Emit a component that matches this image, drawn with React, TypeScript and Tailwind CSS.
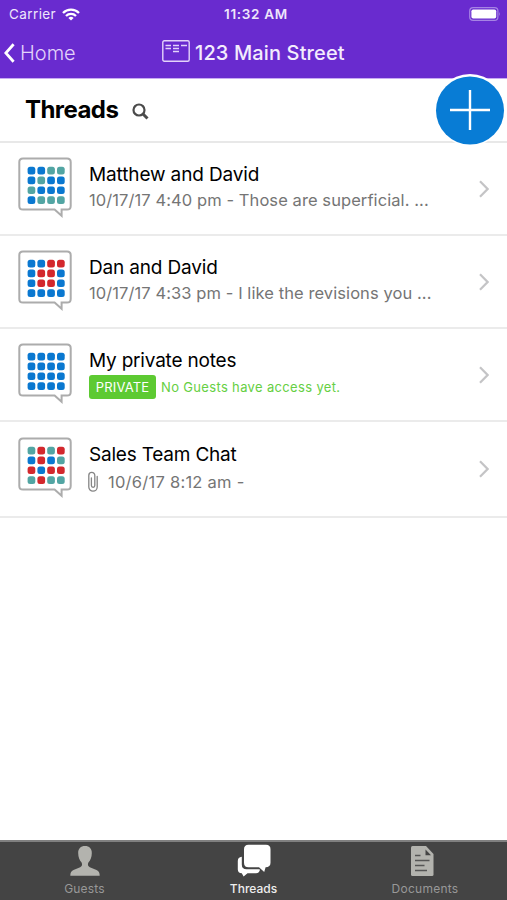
import React from "react";

type Thread = {
  title: string;
  titleClass: string;
  date: string;
  dateClass: string;
  cells: string;
  rowClass: string;
  isPrivate?: boolean;
  hasAttachment?: boolean;
};

const threads: Thread[] = [
  {
    title: "Matthew and David",
    titleClass: "tracking-[-0.13px]",
    date: "10/17/17 4:40 pm - Those are superficial. ...",
    dateClass: "tracking-[0.08px]",
    cells: "bbttbtbbtbbbbttt",
    rowClass: "h-[93px]",
  },
  {
    title: "Dan and David",
    titleClass: "tracking-[-0.17px]",
    date: "10/17/17 4:33 pm - I like the revisions you ...",
    dateClass: "tracking-[0.08px]",
    cells: "bbrrbrrbbrrbbbbb",
    rowClass: "h-[93px]",
  },
  {
    title: "My private notes",
    titleClass: "tracking-[-0.2px]",
    date: "",
    dateClass: "",
    cells: "bbbbbbbbbbbbbbbb",
    rowClass: "h-[93px]",
    isPrivate: true,
  },
  {
    title: "Sales Team Chat",
    titleClass: "tracking-[-0.2px]",
    date: "10/6/17 8:12 am -",
    dateClass: "tracking-[0.25px]",
    cells: "trtrbrbtrbrrtrtt",
    rowClass: "h-[96px] pt-px",
    hasAttachment: true,
  },
];

const cellColors: Record<string, string> = {
  b: "#0a78d0",
  t: "#52a5a3",
  r: "#d3282d",
};

const ThreadIcon = ({ cells }: { cells: string }) => (
  <svg width="54" height="62" viewBox="0 0 54 62" className="shrink-0">
    <path
      d="M5 1.4H49Q52.7 1.4 52.7 5V49Q52.7 52.6 49 52.6H43.6V58.8L36.6 52.6H5Q1.3 52.6 1.3 49V5Q1.3 1.4 5 1.4Z"
      fill="#fff"
      stroke="#acacac"
      strokeWidth="2"
    />
    {cells.split("").map((c, i) => (
      <rect
        key={i}
        x={9.6 + (i % 4) * 9.8}
        y={9.8 + Math.floor(i / 4) * 9.8}
        width="7.7"
        height="7.7"
        rx="2.5"
        fill={cellColors[c]}
      />
    ))}
  </svg>
);

const Paperclip = () => (
  <svg width="11" height="22" viewBox="0 0 11 22" fill="none" stroke="#858585" strokeWidth="1.3" strokeLinecap="round">
    <path d="M3.4 7V14.6A1.7 1.7 0 0 0 6.8 14.6V4.4A3 3 0 0 0 .8 4.4V16A4.2 4.2 0 0 0 9.2 16V5.5" />
  </svg>
);

const ThreadRow = ({ thread }: { thread: Thread }) => (
  <div className={`flex border-b-2 border-[#ebebeb] pl-[18px] pr-[18px] ${thread.rowClass}`}>
    <div className="pt-[14px]">
      <ThreadIcon cells={thread.cells} />
    </div>
    <div className="ml-[17px] grow pt-[19px] whitespace-nowrap">
      <div className={`text-[19px] leading-[26px] text-black ${thread.titleClass}`}>{thread.title}</div>
      {thread.isPrivate ? (
        <div className="mt-px flex h-6 items-center gap-[5px]">
          <span className="flex h-6 w-[67px] items-center justify-center rounded-[3px] bg-[#5dca32] pt-px text-[13px] tracking-[0.2px] text-white">
            PRIVATE
          </span>
          <span className="pt-px text-[13px] tracking-[0.34px] text-[#66cf43]">No Guests have access yet.</span>
        </div>
      ) : thread.hasAttachment ? (
        <div className="mt-px flex h-[26px] items-center text-[16.5px] text-[#757575]">
          <span className="-ml-px mr-[9px]">
            <Paperclip />
          </span>
          <span className={thread.dateClass}>{thread.date}</span>
        </div>
      ) : (
        <div className="text-[16.5px] leading-[24px] text-[#757575]">
          <span className={thread.dateClass}>{thread.date}</span>
        </div>
      )}
    </div>
    <svg width="10" height="18" viewBox="0 0 10 18" className="mt-[37px] shrink-0" fill="none" stroke="#c4c4c6" strokeWidth="2.2">
      <path d="M1 1.2L8.6 9L1 16.8" />
    </svg>
  </div>
);

const StatusBar = () => (
  <div className="flex h-7 items-center justify-between pl-[9px] pr-[6px] text-[13.5px] text-[#eee6fb]">
    <div className="flex w-[120px] items-center gap-[6px]">
      <span className="tracking-[0.4px]">Carrier</span>
      <svg width="18" height="13" viewBox="0 0 18 13" fill="none" stroke="#fff" strokeWidth="2.3">
        <path d="M1 5A11.2 11.2 0 0 1 17 5" />
        <path d="M4 8A7 7 0 0 1 14 8" />
        <path d="M9 12.6L6.4 10A3.7 3.7 0 0 1 11.6 10Z" fill="#fff" stroke="none" />
      </svg>
    </div>
    <span className="pl-[2px] font-semibold tracking-[0.7px]">11:32 AM</span>
    <div className="flex w-[120px] justify-end">
      <svg width="32" height="14" viewBox="0 0 32 14">
        <rect x="0.7" y="0.7" width="28.2" height="12.6" rx="3.4" fill="none" stroke="#a684e4" strokeWidth="1.2" />
        <rect x="2.4" y="2.4" width="24.8" height="9.2" rx="1.8" fill="#fff" />
        <path d="M30.2 4.8Q31.8 7 30.2 9.2Z" fill="#a684e4" />
      </svg>
    </div>
  </div>
);

const NavBar = () => (
  <div className="flex h-[50px] items-center text-[#f3ecfd]">
    <div className="flex w-[162px] items-center gap-[5px] pl-1">
      <svg width="11" height="20" viewBox="0 0 11 20" fill="none" stroke="#fff" strokeWidth="2.8">
        <path d="M9.6 1.2L1.8 10L9.6 18.8" />
      </svg>
      <span className="text-[20px] font-light text-[#e3d3fa]">Home</span>
    </div>
    <svg width="28" height="22" viewBox="0 0 28 22" fill="none" stroke="#e3d3fa" className="-mt-[4px]">
      <rect x="0.8" y="0.8" width="26.4" height="20.4" rx="1.5" strokeWidth="1.4" />
      <path d="M3.5 5.5H9M3.5 8.5H9M11 5.5H17M11 8.5H17M11 11.5H17M19 5.5H25" strokeWidth="1.3" />
    </svg>
    <span className="ml-[5px] text-[20px] font-medium tracking-[0.12px]">123 Main Street</span>
  </div>
);

const TabBar = () => (
  <div className="flex h-[60px] border-t-2 border-[#808080] bg-[#444] text-[12px] text-[#989898]">
    <div className="flex w-[169px] flex-col items-center">
      <svg width="30" height="31" viewBox="0 0 30 31" className="mt-[3px]" fill="#b3b3ae">
        <path d="M15 1C10.7 1 8 3.7 8.2 8.2C8.2 12.2 9.6 15.3 11.6 17.4C12.5 19.5 12.2 21 10.2 22.2L3.5 25C1 26.2 .3 27.7 .3 30.8H29.7C29.7 27.7 29 26.2 26.5 25L19.8 22.2C17.8 21 17.5 19.5 18.4 17.4C20.4 15.3 21.8 12.2 21.8 8.2C22 3.7 19.3 1 15 1Z" />
      </svg>
      <span className="mt-[5px] leading-4 tracking-[0.2px]">Guests</span>
    </div>
    <div className="flex w-[169px] flex-col items-center">
      <svg width="34" height="33" viewBox="0 0 34 33" className="mt-[2px]" fill="#fff">
        <path d="M4.8 12.7Q.8 13 .8 17V25.5Q.8 29 4.8 29.3L6.6 32.4L10.5 29.3H19Q22.5 29.3 23 25.6L21.5 25.2H9.5Q4.8 25.2 4.8 20.5Z" />
        <path d="M11.5 .8H29Q33.5 .8 33.5 5.3V18.8Q33.5 23.2 28.6 23.3L27.2 28L22 23.3H11.5Q7 23.3 7 18.8V5.3Q7 .8 11.5 .8Z" />
      </svg>
      <span className="mt-[4px] font-medium leading-4 text-[#eee]">Threads</span>
    </div>
    <div className="flex w-[169px] flex-col items-center">
      <svg width="23" height="30" viewBox="0 0 23 30" className="mt-[4px]">
        <path d="M1.5 0H15L22.5 8V28.5Q22.5 30 21 30H1.5Q0 30 0 28.5V1.5Q0 0 1.5 0Z" fill="#b3b3ae" />
        <path d="M14.5 3.5V9.2H20Z" fill="#444" />
        <path d="M4 9.5H9.5M4 14.5H18.5M4 19.5H13.5M4 24.5H16" stroke="#555" strokeWidth="1.7" />
      </svg>
      <span className="ml-[5px] mt-[5px] leading-4 tracking-[0.25px]">Documents</span>
    </div>
  </div>
);

const App: React.FC = (): React.JSX.Element => {
  return (
    <div className="relative flex h-[900px] w-[507px] flex-col bg-white font-[Inter,sans-serif]">
      <header className="h-[79px] shrink-0 border-b border-[#c8abf3] bg-[#692bcf]">
        <StatusBar />
        <NavBar />
      </header>
      <div className="flex h-[64px] shrink-0 items-center border-b-2 border-[#e8e8e8] pl-[25px]">
        <h1 className="text-[24px] font-bold tracking-[-0.55px] text-black">Threads</h1>
        <svg width="17" height="17" viewBox="0 0 17 17" className="ml-[14px] mt-[3px]" fill="none" stroke="#4b4b4b">
          <circle cx="7" cy="7" r="5.5" strokeWidth="2.2" />
          <path d="M11 11L15.5 15.5" strokeWidth="3" />
        </svg>
      </div>
      <button className="absolute left-[434px] top-[74px] rounded-full">
        <svg width="72" height="72" viewBox="0 0 72 72">
          <circle cx="36" cy="36" r="36" fill="#fff" />
          <circle cx="36" cy="36.5" r="34" fill="#087cd5" />
          <path d="M36 16V56M16 36H56" stroke="#fff" strokeWidth="2.4" />
        </svg>
      </button>
      <main className="grow">
        {threads.map((thread) => (
          <ThreadRow key={thread.title} thread={thread} />
        ))}
      </main>
      <TabBar />
    </div>
  );
};

export default App;
